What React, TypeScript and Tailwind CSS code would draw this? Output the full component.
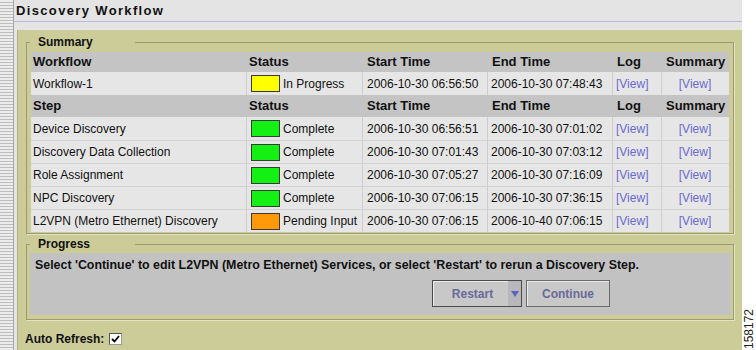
import React from "react";

const cols = "grid grid-cols-[216px_116px_125px_125px_49px_66px]";

type Row = { name: string; swatch: string; status: string; start: string; end: string };

const steps: Row[] = [
  { name: "Device Discovery", swatch: "bg-[#14f014]", status: "Complete", start: "2006-10-30 06:56:51", end: "2006-10-30 07:01:02" },
  { name: "Discovery Data Collection", swatch: "bg-[#14f014]", status: "Complete", start: "2006-10-30 07:01:43", end: "2006-10-30 07:03:12" },
  { name: "Role Assignment", swatch: "bg-[#14f014]", status: "Complete", start: "2006-10-30 07:05:27", end: "2006-10-30 07:16:09" },
  { name: "NPC Discovery", swatch: "bg-[#14f014]", status: "Complete", start: "2006-10-30 07:06:15", end: "2006-10-30 07:36:15" },
  { name: "L2VPN (Metro Ethernet) Discovery", swatch: "bg-[#ff990a]", status: "Pending Input", start: "2006-10-30 07:06:15", end: "2006-10-40 07:06:15" },
];

function Header({ first, h }: { first: string; h: string }) {
  return (
    <div className={`${cols} ${h} items-center bg-[#c4c4c4] text-[13px] font-bold text-[#111]`}>
      <div className="pl-[2px]">{first}</div>
      <div className="pl-[2px]">Status</div>
      <div className="pl-[4px]">Start Time</div>
      <div className="pl-[4px]">End Time</div>
      <div className="pl-[4px]">Log</div>
      <div className="pl-[4px]">Summary</div>
    </div>
  );
}

function DataRow({ r, top }: { r: Row; top?: boolean }) {
  return (
    <div
      className={`${cols} h-[23px] bg-[#e6e6e6] text-[12px] text-[#111] ${top ? "" : "border-t border-[#d2d2d2]"}`}
    >
      <div className="flex items-center pl-[2px] border-r border-[#cdcdcd] whitespace-nowrap">{r.name}</div>
      <div className="flex items-center pl-[4px] border-r border-[#cdcdcd]">
        <div className={`w-[29px] h-[17px] shrink-0 border border-[#3a3a3a] ${r.swatch}`} />
        <span className="ml-[3px] whitespace-nowrap">{r.status}</span>
      </div>
      <div className="flex items-center pl-[4px] border-r border-[#cdcdcd] whitespace-nowrap">{r.start}</div>
      <div className="flex items-center pl-[3px] border-r border-[#cdcdcd] whitespace-nowrap">{r.end}</div>
      <div className="flex items-center pl-[3px] border-r border-[#cdcdcd] text-[#6a6ad0]">[View]</div>
      <div className="flex items-center justify-center text-[#6a6ad0]">[View]</div>
    </div>
  );
}

function Legend({ children }: { children: React.ReactNode }) {
  return (
    <span className="absolute -top-[9px] left-[3px] w-[105px] pl-[8px] bg-[#cccc99] text-[12px] font-bold text-[#111] leading-[16px]">
      {children}
    </span>
  );
}

export default function App() {
  return (
    <div className="w-[756px] h-[350px] flex bg-white overflow-hidden font-['Liberation_Sans',Arial,sans-serif]">
      {/* striped left edge */}
      <div className="w-[13px] h-full bg-[repeating-linear-gradient(to_bottom,#ececec_0px,#ececec_2px,#bdbdbd_2px,#bdbdbd_3px)]" />
      {/* main window */}
      <div className="w-[729px] h-full flex flex-col bg-[#e4e4e4] border-l border-[#a8a8a8]">
        <div className="h-[22px] flex items-center pl-[2px] border-b border-[#b8b8d6]">
          <span className="text-[13px] font-bold tracking-[1.35px] text-[#111]">Discovery Workflow</span>
        </div>
        <div className="h-[8px]" />
        <div className="flex-1 ml-[3px] bg-[#cccc99] border-l border-[#b0b080] flex flex-col pt-[12px] pl-[8px] pr-[8px]">
          {/* Summary fieldset */}
          <div className="relative border border-[#9c9c74] shadow-[1px_1px_0_#e4e4c4] pt-[9px] pl-[4px] pr-[4px] pb-[1px]">
            <Legend>Summary</Legend>
            <Header first="Workflow" h="h-[20px]" />
            <DataRow
              top
              r={{ name: "Workflow-1", swatch: "bg-[#ffff00]", status: "In Progress", start: "2006-10-30 06:56:50", end: "2006-10-30 07:48:43" }}
            />
            <Header first="Step" h="h-[22px]" />
            {steps.map((s, i) => (
              <DataRow key={s.name} r={s} top={i === 0} />
            ))}
          </div>
          {/* Progress fieldset */}
          <div className="relative mt-[10px] border border-[#9c9c74] shadow-[1px_1px_0_#e4e4c4] pt-[8px] pl-[3px] pr-[2px] pb-[4px]">
            <Legend>Progress</Legend>
            <div className="h-[62px] bg-[#c2c2c2] pl-[5px] pt-[5px]">
              <div className="text-[12.4px] font-bold text-[#111] leading-[14px] whitespace-nowrap">
                Select 'Continue' to edit L2VPN (Metro Ethernet) Services, or select 'Restart' to rerun a Discovery Step.
              </div>
              <div className="flex mt-[8px] pl-[397px] gap-[4px]">
                <div className="w-[90px] h-[27px] flex border border-[#4a4a4a] bg-[#c8c8c8] shadow-[inset_1px_1px_0_#ececec]">
                  <div className="flex-1 flex items-center justify-center text-[12px] font-bold text-[#6a6a9a] pl-[4px]">Restart</div>
                  <div className="w-[13px] flex items-center justify-center bg-[#b8b8bc]">
                    <svg width="8" height="6" viewBox="0 0 8 6">
                      <path d="M0 0 L8 0 L4 6 Z" fill="#5c64c0" />
                    </svg>
                  </div>
                </div>
                <div className="w-[84px] h-[27px] flex items-center justify-center border border-[#6a6a6a] bg-[#c8c8c8] shadow-[inset_1px_1px_0_#ececec] text-[12px] font-bold text-[#6a6a9a]">
                  Continue
                </div>
              </div>
            </div>
          </div>
          {/* Auto refresh */}
          <div className="flex items-center mt-[10px] -ml-[1px]">
            <span className="text-[12px] font-bold text-[#111]">Auto Refresh:</span>
            <div className="ml-[5px] w-[13px] h-[12px] bg-white border border-t-[#555] border-l-[#555] border-b-[#999] border-r-[#999] flex items-center justify-center">
              <svg width="9" height="8" viewBox="0 0 9 8">
                <path d="M1 4 L3.5 6.5 L8 1" stroke="#000" strokeWidth="1.8" fill="none" />
              </svg>
            </div>
          </div>
        </div>
      </div>
      {/* right white margin with figure number */}
      <div className="flex-1 flex flex-col justify-end items-center pb-[1px]">
        <span className="[writing-mode:vertical-rl] rotate-180 text-[12px] leading-[12px] text-[#222] font-['Liberation_Sans',Arial,sans-serif]">
          158172
        </span>
      </div>
    </div>
  );
}
